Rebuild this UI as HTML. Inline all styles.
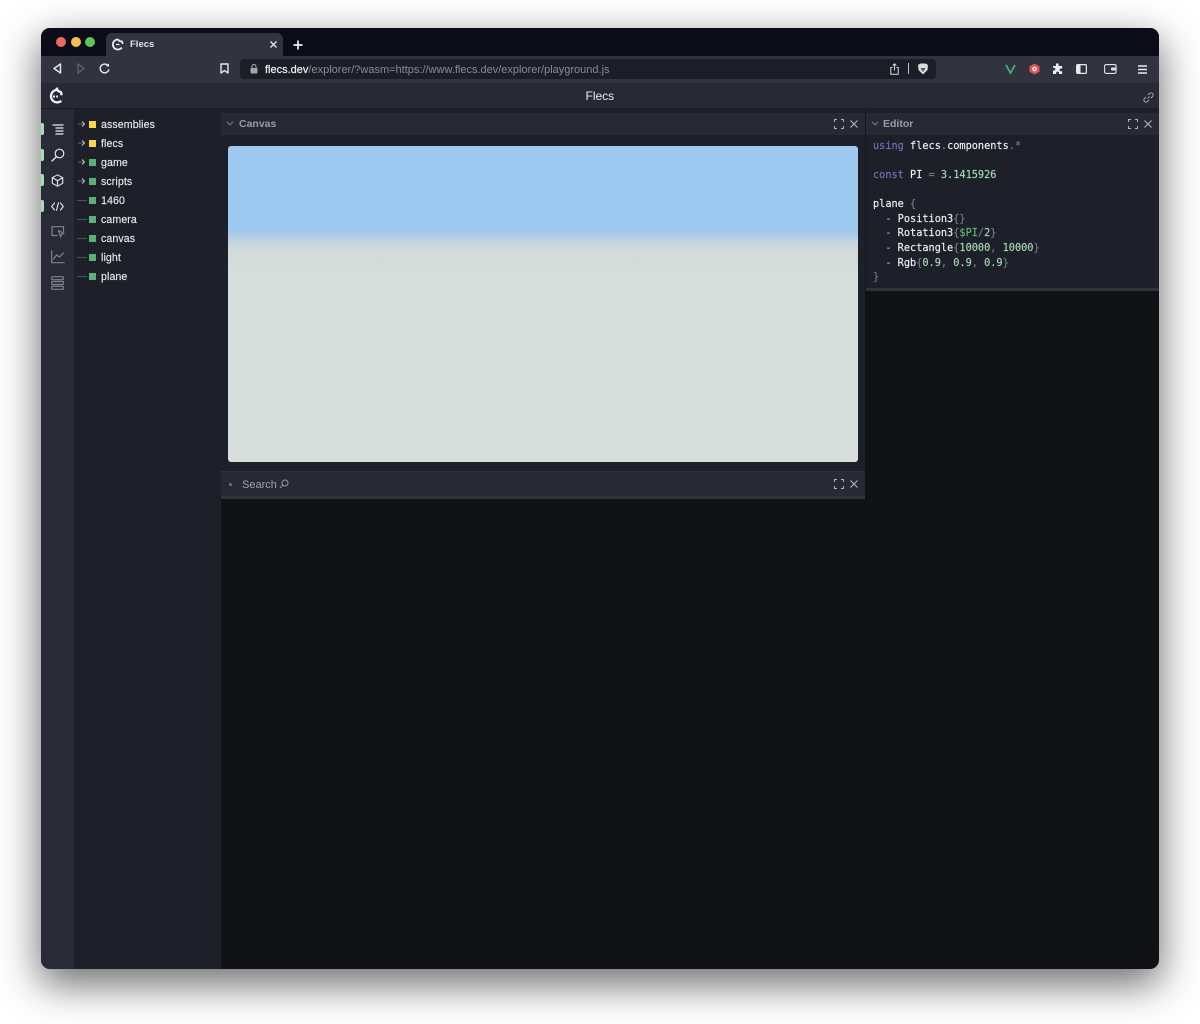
<!DOCTYPE html>
<html><head><meta charset="utf-8"><style>
html,body{margin:0;padding:0;width:1200px;height:1024px;overflow:hidden;background:#fff;font-family:"Liberation Sans",sans-serif}
div,span,svg{position:absolute;box-sizing:border-box}
#win{left:41px;top:28px;width:1118px;height:941px;border-radius:9px;background:#111216;overflow:hidden}
#shadow{left:41px;top:28px;width:1118px;height:941px;border-radius:9px;box-shadow:0 14px 40px 2px rgba(0,0,0,.56)}
.t{white-space:nowrap;line-height:1}
.row{left:101px;font-size:10.6px;color:#e8e9ec;letter-spacing:.1px;-webkit-text-stroke:.15px #e8e9ec}
.sq{left:89px;width:7px;height:7px}
.y{background:#fbd84a}.g{background:#5bb075}
.dash{left:77px;width:10px;height:1px;background:#50535c}
.code{font:10.25px/14.6px "DejaVu Sans Mono",monospace;color:#f0f1f3;left:873px;white-space:pre;-webkit-text-stroke:.15px}
.k{color:#7b6fb8;position:static}.o{color:#777b84;position:static}.n{color:#a6dcb3;position:static}.v{color:#5cb878;position:static}.d{color:#a8aab0;position:static}
svg{overflow:visible}
.i{fill:none;stroke:#c5c7cc;stroke-width:1.2;stroke-linecap:round;stroke-linejoin:round}
.w{fill:none;stroke:#e8e9ec;stroke-width:1.4;stroke-linecap:round;stroke-linejoin:round}
</style></head><body>
<div id="shadow"></div>
<div style="left:0;top:0;width:1200px;height:1024px">
<div id="win" style="position:absolute">
 <div style="left:0;top:0;width:1118px;height:28px;background:#0b0c18"></div>
 <div style="left:65px;top:5px;width:177px;height:24px;background:#31343f;border-radius:6px 6px 0 0"></div>
 <div style="left:0;top:28px;width:1118px;height:27px;background:#31343f"></div>
 <div style="left:0;top:55px;width:1118px;height:26px;background:#272a35;border-bottom:1px solid #1b1d25"></div>
 <div style="left:0;top:81px;width:33px;height:860px;background:#282b36"></div>
 <div style="left:33px;top:81px;width:147px;height:860px;background:#1d2029"></div>
</div>
</div>

<!-- traffic -->
<div style="left:56px;top:37px;width:10px;height:10px;border-radius:50%;background:#ec6a5e"></div>
<div style="left:70.500px;top:37px;width:10px;height:10px;border-radius:50%;background:#f4bf4f"></div>
<div style="left:85px;top:37px;width:10px;height:10px;border-radius:50%;background:#61c554"></div>

<!-- tab -->
<svg style="left:112px;top:38px" width="12" height="13" viewBox="0 0 12 13"><path d="M9.800 9.600A5 5 0 1 1 6 1.500l1.500 1.500L10 3.500l.8 2.500" fill="none" stroke="#eee" stroke-width="1.800"/><path d="M4 6.500h3.500" stroke="#eee" stroke-width="1.300"/></svg>
<div class="t" style="left:130px;top:40px;font-size:9.500px;font-weight:bold;color:#dfe0e3">Flecs</div>
<svg style="left:270px;top:41px" width="7" height="7"><path d="M.5.5l6 6M6.500.5l-6 6" stroke="#e8e9ec" stroke-width="1.300"/></svg>
<svg style="left:293px;top:40px" width="10" height="10"><path d="M5 .5v9M.5 5h9" stroke="#f2f2f2" stroke-width="1.700"/></svg>

<!-- toolbar -->
<svg style="left:53px;top:63px" width="9" height="11"><path d="M7.500 1L1 5.500l6.500 4.500z" class="w"/></svg>
<svg style="left:77px;top:63px" width="8" height="11"><path d="M1 1l6 4.500-6 4.500z" fill="none" stroke="#62656f" stroke-width="1.200"/></svg>
<svg style="left:99px;top:63px" width="11" height="11"><path d="M9.300 3A4.400 4.400 0 1 0 9.800 6.800" class="w"/><path d="M6.800 3.300h3.200V.4" fill="#e8e9ec" stroke="none"/></svg>
<svg style="left:220px;top:63px" width="9" height="11"><path d="M1 1h7v9L4.500 7.600 1 10z" class="w"/></svg>
<div style="left:240px;top:58.500px;width:696px;height:20.500px;background:#1c1e27;border-radius:4px"></div>
<svg style="left:250px;top:64px" width="8" height="10"><rect x="0.500" y="4" width="7" height="5.500" rx="1" fill="#a3a5ab"/><path d="M2 4V2.500a2 2 0 0 1 4 0V4" fill="none" stroke="#a3a5ab" stroke-width="1.100"/></svg>
<div class="t" style="left:265px;top:65px;font-size:11px;color:#8a8c93"><span style="position:static;color:#eff0f2;-webkit-text-stroke:.2px #eff0f2">flecs.dev</span>/explorer/?wasm=https://www.flecs.dev/explorer/playground.js</div>
<svg style="left:890px;top:63px" width="9" height="12"><path d="M2.500 4.500H.8v6.700h7.400V4.500H6.500M4.500 7.500V.8M2.700 2.500L4.500.8l1.800 1.700" fill="none" stroke="#d8d9dc" stroke-width="1"/></svg>
<div style="left:908px;top:63px;width:1px;height:11px;background:#c5c7cc"></div>
<svg style="left:917px;top:63px" width="12" height="12"><path d="M1 2l2.500-1.500h5L11 2l-.5 5L6 11.500 1.500 7z" fill="#d9dadd"/><path d="M3.500 5L6 9l2.500-4z" fill="#555"/></svg>
<svg style="left:1005px;top:64px" width="11" height="10"><path d="M1 1l4.500 8L10 1" fill="none" stroke="#41b883" stroke-width="1.700"/></svg>
<svg style="left:1029px;top:63px" width="11" height="12"><path d="M5.500.5L10.500 3.200v5.600L5.500 11.500.5 8.800V3.200z" fill="#e4544c"/><circle cx="5.500" cy="6" r="2.300" fill="#fff"/><circle cx="5.500" cy="6" r="1" fill="#e4544c"/></svg>
<svg style="left:1052px;top:63px" width="11" height="11"><path d="M4 1.500a1.300 1.300 0 0 1 2.600 0V3h3.500v2.500H9a1.400 1.400 0 0 0 0 2.800h1.100V11H7V10a1.400 1.400 0 0 0-2.800 0V11H1V7.500h1a1.300 1.300 0 0 0 0-2.700H1V3h3z" fill="#f0f0f2"/></svg>
<svg style="left:1076px;top:64px" width="11" height="10"><rect x=".6" y=".6" width="9.800" height="8.800" rx="1" fill="none" stroke="#e8e9ec" stroke-width="1.200"/><rect x="1" y="1" width="3.500" height="8" fill="#e8e9ec"/></svg>
<svg style="left:1104px;top:64px" width="13" height="10"><rect x=".6" y=".6" width="11.500" height="8.800" rx="1.500" fill="none" stroke="#e0e1e4" stroke-width="1.100"/><rect x="7" y="3.500" width="5" height="3" rx="1" fill="#e0e1e4"/></svg>
<svg style="left:1138px;top:65px" width="9" height="9"><path d="M0 1h9M0 4.500h9M0 8h9" stroke="#e8e9ec" stroke-width="1.500"/></svg>

<!-- app header -->
<svg style="left:48px;top:88px" width="16" height="17" viewBox="0 0 16 17"><path d="M13.300 12.800A6.200 6.200 0 1 1 7.500 2.200L9 .8l1 2.200 3 1.200.7 3" fill="none" stroke="#f2f2f4" stroke-width="2.300"/><path d="M5 8.500h5" stroke="#f2f2f4" stroke-width="2" stroke-dasharray="2 1.200"/></svg>
<div class="t" style="left:585.500px;top:90px;font-size:12px;color:#eceded">Flecs</div>
<svg style="left:1143px;top:92px" width="11" height="11"><path d="M4.500 6.500l2-2M5 3l1.500-1.500a2 2 0 0 1 3 3L8 6M6 8L4.500 9.500a2 2 0 0 1-3-3L3 5" fill="none" stroke="#a4a6ac" stroke-width="1"/></svg>

<!-- sidebar -->
<div style="left:41px;top:123px;width:3px;height:12px;background:#a6dcb3;border-radius:0 2px 2px 0"></div>
<div style="left:41px;top:149px;width:3px;height:12px;background:#a6dcb3;border-radius:0 2px 2px 0"></div>
<div style="left:41px;top:174px;width:3px;height:12px;background:#a6dcb3;border-radius:0 2px 2px 0"></div>
<div style="left:41px;top:200px;width:3px;height:12px;background:#a6dcb3;border-radius:0 2px 2px 0"></div>
<svg style="left:52px;top:124px" width="12" height="11"><path d="M.5 1h11M3.500 4h8M3.500 7h8M3.500 10h8" stroke="#e8e9ec" stroke-width="1.200"/></svg>
<svg style="left:51px;top:148px" width="14" height="14"><circle cx="8.500" cy="5.500" r="4.300" class="w" style="stroke-width:1.200"/><path d="M5.300 8.700L1 13" class="w"/></svg>
<svg style="left:51px;top:174px" width="13" height="13"><path d="M6.500.8l5.200 2.900v5.600l-5.200 2.900-5.200-2.900V3.700zM1.300 3.700l5.200 2.900 5.200-2.900M6.500 6.600v5.600" class="w" style="stroke-width:1.100"/></svg>
<svg style="left:51px;top:202px" width="13" height="9"><path d="M3.500 1L.7 4.500 3.500 8M9.500 1l2.800 3.500L9.500 8M7.500.7L5.500 8.300" class="w" style="stroke-width:1.100"/></svg>
<svg style="left:51px;top:226px" width="14" height="12"><path d="M6 9.500H1V.7h11.500v5" class="i" style="stroke:#80838b"/><path d="M7.500 4.500l5.500 3-2.500.8-.8 2.700z" class="i" style="stroke:#80838b"/></svg>
<svg style="left:51px;top:250px" width="14" height="14"><path d="M.7.700v12h12.600M2.500 9l3-4 3 2 4-4" class="i" style="stroke:#80838b"/></svg>
<svg style="left:51px;top:276px" width="13" height="14"><rect x=".7" y=".7" width="11.600" height="3" rx=".7" class="i" style="stroke:#80838b"/><rect x=".7" y="5.500" width="11.600" height="3" rx=".7" class="i" style="stroke:#80838b"/><rect x=".7" y="10.300" width="11.600" height="3" rx=".7" class="i" style="stroke:#80838b"/></svg>

<!-- tree -->
<svg style="left:78px;top:121px" width="10" height="6"><path d="M0 3h6" stroke="#62656f"/><path d="M4 .5L6.500 3 4 5.500" fill="none" stroke="#c5c7cc"/></svg>
<svg style="left:78px;top:140px" width="10" height="6"><path d="M0 3h6" stroke="#62656f"/><path d="M4 .5L6.500 3 4 5.500" fill="none" stroke="#c5c7cc"/></svg>
<svg style="left:78px;top:159px" width="10" height="6"><path d="M0 3h6" stroke="#62656f"/><path d="M4 .5L6.500 3 4 5.500" fill="none" stroke="#c5c7cc"/></svg>
<svg style="left:78px;top:178px" width="10" height="6"><path d="M0 3h6" stroke="#62656f"/><path d="M4 .5L6.500 3 4 5.500" fill="none" stroke="#c5c7cc"/></svg>
<div class="sq y" style="top:120.500px"></div><div class="t row" style="top:119.500px">assemblies</div>
<div class="sq y" style="top:139.500px"></div><div class="t row" style="top:138.500px">flecs</div>
<div class="sq g" style="top:158.500px"></div><div class="t row" style="top:157.500px">game</div>
<div class="sq g" style="top:177.500px"></div><div class="t row" style="top:176.500px">scripts</div>
<div class="dash" style="top:200px"></div><div class="sq g" style="top:196.500px"></div><div class="t row" style="top:195.500px">1460</div>
<div class="dash" style="top:219px"></div><div class="sq g" style="top:215.500px"></div><div class="t row" style="top:214.500px">camera</div>
<div class="dash" style="top:238px"></div><div class="sq g" style="top:234.500px"></div><div class="t row" style="top:233.500px">canvas</div>
<div class="dash" style="top:257px"></div><div class="sq g" style="top:253.500px"></div><div class="t row" style="top:252.500px">light</div>
<div class="dash" style="top:276px"></div><div class="sq g" style="top:272.500px"></div><div class="t row" style="top:271.500px">plane</div>

<!-- canvas panel -->
<div style="left:221px;top:109px;width:644px;height:362px;background:#1d2029"></div>
<div style="left:221px;top:113px;width:644px;height:22px;background:#272a35"></div>
<svg style="left:226px;top:121px" width="8" height="5"><path d="M1 .8l3 3 3-3" fill="none" stroke="#83868e"/></svg>
<div class="t" style="left:239px;top:119px;font-size:10.500px;font-weight:bold;color:#9a9ca3">Canvas</div>
<svg style="left:834px;top:119px" width="10" height="10"><path d="M.5 3V.5H3M7 .5h2.500V3M9.500 7v2.500H7M3 9.500H.5V7" fill="none" stroke="#b0b2b8" stroke-width="1"/></svg>
<svg style="left:850px;top:120px" width="8" height="8"><path d="M.5.5l7 7M7.500.5l-7 7" stroke="#b8bac0" stroke-width="1"/></svg>
<div style="left:228px;top:146px;width:630px;height:316px;border-radius:3px;background:linear-gradient(#9dc8ef 0,#9dc8ef 82px,#a9cbe9 88px,#c5d5dd 96px,#d3dbdb 108px,#d8dedb 135px,#d8dedb 316px)"></div>

<!-- search panel -->
<div style="left:221px;top:471px;width:644px;height:28px;background:#272a35;border-top:1px solid #30333e;border-bottom:3px solid #30333e"></div>
<div style="left:229px;top:483px;width:3px;height:3px;border-radius:50%;background:#70737b"></div>
<div class="t" style="left:242px;top:480px;font-size:11px;color:#a0a2a9">Search</div>
<svg style="left:279px;top:479px" width="10" height="10"><circle cx="6" cy="4" r="3" fill="none" stroke="#9a9ca3"/><path d="M3.800 6.200L1 9" stroke="#9a9ca3"/></svg>
<svg style="left:834px;top:479px" width="10" height="10"><path d="M.5 3V.5H3M7 .5h2.500V3M9.500 7v2.500H7M3 9.500H.5V7" fill="none" stroke="#b0b2b8" stroke-width="1"/></svg>
<svg style="left:850px;top:480px" width="8" height="8"><path d="M.5.5l7 7M7.500.5l-7 7" stroke="#b8bac0" stroke-width="1"/></svg>

<!-- editor -->
<div style="left:865px;top:109px;width:294px;height:182px;background:#1d2029;border-left:1px solid #15161b"></div>
<div style="left:866px;top:113px;width:293px;height:22px;background:#272a35"></div>
<div style="left:866px;top:288px;width:293px;height:3px;background:#30333e"></div>
<svg style="left:871px;top:121px" width="8" height="5"><path d="M1 .8l3 3 3-3" fill="none" stroke="#83868e"/></svg>
<div class="t" style="left:883px;top:119px;font-size:10.500px;font-weight:bold;color:#9a9ca3">Editor</div>
<svg style="left:1128px;top:119px" width="10" height="10"><path d="M.5 3V.5H3M7 .5h2.500V3M9.500 7v2.500H7M3 9.500H.5V7" fill="none" stroke="#b0b2b8" stroke-width="1"/></svg>
<svg style="left:1144px;top:120px" width="8" height="8"><path d="M.5.5l7 7M7.500.5l-7 7" stroke="#b8bac0" stroke-width="1"/></svg>
<div class="code" style="top:138.800px"><span class="k">using</span> flecs<span class="o">.</span>components<span class="o">.*</span>

<span class="k">const</span> PI <span class="o">=</span> <span class="n">3.1415926</span>

plane <span class="o">{</span>
  <span class="d">-</span> Position3<span class="o">{}</span>
  <span class="d">-</span> Rotation3<span class="o">{</span><span class="v">$PI</span><span class="o">/</span><span class="n">2</span><span class="o">}</span>
  <span class="d">-</span> Rectangle<span class="o">{</span><span class="n">10000</span><span class="o">,</span> <span class="n">10000</span><span class="o">}</span>
  <span class="d">-</span> Rgb<span class="o">{</span><span class="n">0.9</span><span class="o">,</span> <span class="n">0.9</span><span class="o">,</span> <span class="n">0.9</span><span class="o">}</span>
<span class="o">}</span></div>
</body></html>
